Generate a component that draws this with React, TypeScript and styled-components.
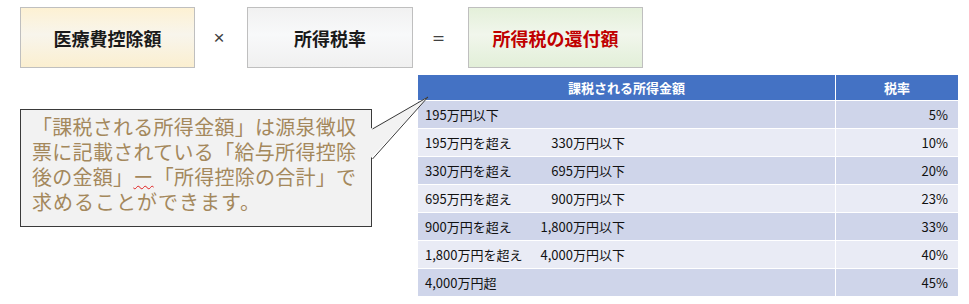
import React from "react";
import styled, { createGlobalStyle } from "styled-components";

const GlobalStyle = createGlobalStyle`
  html, body { margin: 0; padding: 0; background: #ffffff; }
  body { font-family: "Noto Sans CJK JP", "Noto Sans", sans-serif; }
`;

const Page = styled.div`
  width: 969px;
  height: 304px;
  box-sizing: border-box;
  padding: 7px 0 0 20px;
  overflow: hidden;
`;

const TopRow = styled.div`
  display: flex;
  height: 61px;
`;

type Tone = "yellow" | "gray" | "green";

const gradients: Record<Tone, string> = {
  yellow: "linear-gradient(to bottom, #fdf1d3 0%, #f8f5ec 45%, #fbefd0 100%)",
  gray: "linear-gradient(to bottom, #f1f1f1 0%, #f8f9fa 45%, #f0f0f0 100%)",
  green: "linear-gradient(to bottom, #e4f0da 0%, #f1f6ec 45%, #e2efd8 100%)",
};

const TermBox = styled.div<{ $tone: Tone; $w: number; $red?: boolean }>`
  box-sizing: border-box;
  width: ${(p) => p.$w}px;
  height: 61px;
  border: 1px solid #bfbfbf;
  background: ${(p) => gradients[p.$tone]};
  display: flex;
  align-items: center;
  justify-content: center;
  font-size: 18px;
  font-weight: 700;
  color: ${(p) => (p.$red ? "#c00000" : "#1a1a1a")};
  padding-top: 1px;
`;

const Operator = styled.div<{ $w: number }>`
  width: ${(p) => p.$w}px;
  display: flex;
  align-items: center;
  justify-content: center;
  font-family: "Liberation Sans", sans-serif;
  font-size: 19px;
  color: #404040;
  padding-right: 4px;
  box-sizing: border-box;
`;

const BottomRow = styled.div`
  display: flex;
  align-items: flex-start;
  margin-top: 7px;
`;

const Callout = styled.div`
  position: relative;
  box-sizing: border-box;
  width: 352px;
  height: 118px;
  margin-top: 34px;
  border: 1px solid #3a3a3a;
  background: #f2f2f2;
  padding: 4px 15px 0 11px;
  color: #a4885c;
  font-size: 20px;
  line-height: 25px;
`;

const Tail = styled.svg`
  position: absolute;
  left: 349px;
  top: -15px;
  overflow: visible;
`;

const Line = styled.div<{ $justify?: boolean }>`
  white-space: nowrap;
  height: 25px;
  text-align: ${(p) => (p.$justify ? "justify" : "left")};
  text-align-last: ${(p) => (p.$justify ? "justify" : "auto")};
  text-justify: inter-character;
  letter-spacing: ${(p) => (p.$justify ? "0" : "1px")};
`;

const Squiggle = styled.span`
  text-decoration: underline wavy #e02020;
  text-decoration-thickness: 1px;
  text-underline-offset: 0px;
`;

const Table = styled.div`
  margin-left: 46px;
  display: grid;
  grid-template-columns: 417px 122px;
  column-gap: 1px;
  row-gap: 1px;
  background: #ffffff;
  font-family: "Liberation Sans Narrow", "Noto Sans CJK JP", sans-serif;
  font-size: 13px;
  color: #111111;
`;

const HeadCell = styled.div`
  height: 25px;
  background: #4472c4;
  color: #ffffff;
  font-family: "Noto Sans CJK JP", sans-serif;
  font-weight: 700;
  display: flex;
  align-items: center;
  justify-content: center;
`;

const Cell = styled.div<{ $odd: boolean; $right?: boolean }>`
  height: 27px;
  box-sizing: border-box;
  background: ${(p) => (p.$odd ? "#cfd5ea" : "#e9ebf5")};
  display: flex;
  align-items: center;
  justify-content: ${(p) => (p.$right ? "flex-end" : "flex-start")};
  padding: 0 10px 0 7px;
  white-space: nowrap;
`;

const Range = styled.div`
  display: grid;
  grid-template-columns: 110px 90px;
  white-space: nowrap;
`;

const Upper = styled.span`
  text-align: right;
`;

const rows: { from: string; to?: string; rate: string }[] = [
  { from: "195万円以下", rate: "5%" },
  { from: "195万円を超え", to: "330万円以下", rate: "10%" },
  { from: "330万円を超え", to: "695万円以下", rate: "20%" },
  { from: "695万円を超え", to: "900万円以下", rate: "23%" },
  { from: "900万円を超え", to: "1,800万円以下", rate: "33%" },
  { from: "1,800万円を超え", to: "4,000万円以下", rate: "40%" },
  { from: "4,000万円超", rate: "45%" },
];

export default function App() {
  return (
    <Page>
      <GlobalStyle />
      <TopRow>
        <TermBox $tone="yellow" $w={175}>医療費控除額</TermBox>
        <Operator $w={52}>×</Operator>
        <TermBox $tone="gray" $w={166}>所得税率</TermBox>
        <Operator $w={55}>＝</Operator>
        <TermBox $tone="green" $w={175} $red>
          所得税の還付額
        </TermBox>
      </TopRow>
      <BottomRow>
        <Callout>
          <Tail width="60" height="70" viewBox="0 0 60 70">
            <polygon points="0,34 58,2 0,64" fill="#f2f2f2" />
            <line x1="2.5" y1="34" x2="58" y2="2" stroke="#3a3a3a" strokeWidth="1" />
            <line x1="2.5" y1="64" x2="58" y2="2" stroke="#3a3a3a" strokeWidth="1" />
          </Tail>
          <Line $justify>「課税される所得金額」は源泉徴収</Line>
          <Line $justify>票に記載されている「給与所得控除</Line>
          <Line $justify>
            後の金額」<Squiggle>ー</Squiggle>「所得控除の合計」で
          </Line>
          <Line>求めることができます。</Line>
        </Callout>
        <Table>
          <HeadCell>課税される所得金額</HeadCell>
          <HeadCell>税率</HeadCell>
          {rows.map((r, i) => (
            <React.Fragment key={i}>
              <Cell $odd={i % 2 === 0}>
                {r.to ? (
                  <Range>
                    <span>{r.from}</span>
                    <Upper>{r.to}</Upper>
                  </Range>
                ) : (
                  <span>{r.from}</span>
                )}
              </Cell>
              <Cell $odd={i % 2 === 0} $right>
                {r.rate}
              </Cell>
            </React.Fragment>
          ))}
        </Table>
      </BottomRow>
    </Page>
  );
}
